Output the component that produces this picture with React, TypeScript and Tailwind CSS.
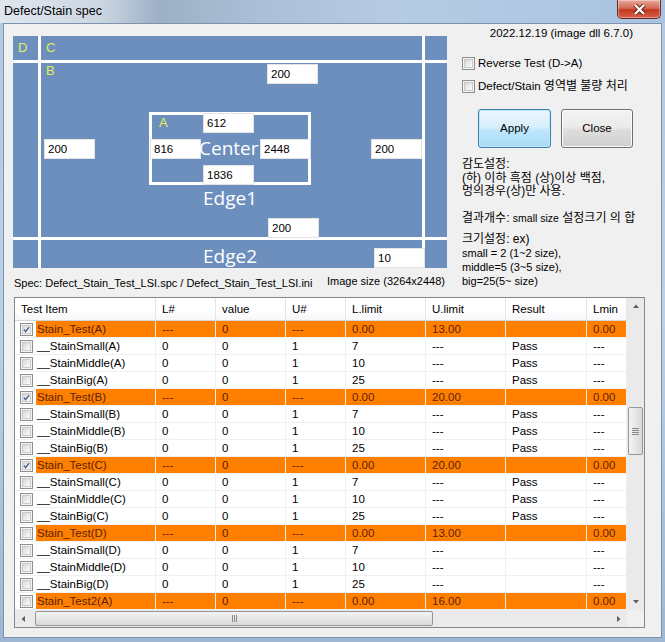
import React from 'react';

type Row = { name: string; head?: boolean; chk?: boolean; cells: string[] };

const rows: Row[] = [
  { name: 'Stain_Test(A)', head: true, chk: true, cells: ['---', '0', '---', '0.00', '13.00', '', '0.00'] },
  { name: '__StainSmall(A)', cells: ['0', '0', '1', '7', '---', 'Pass', '---'] },
  { name: '__StainMiddle(A)', cells: ['0', '0', '1', '10', '---', 'Pass', '---'] },
  { name: '__StainBig(A)', cells: ['0', '0', '1', '25', '---', 'Pass', '---'] },
  { name: 'Stain_Test(B)', head: true, chk: true, cells: ['---', '0', '---', '0.00', '20.00', '', '0.00'] },
  { name: '__StainSmall(B)', cells: ['0', '0', '1', '7', '---', 'Pass', '---'] },
  { name: '__StainMiddle(B)', cells: ['0', '0', '1', '10', '---', 'Pass', '---'] },
  { name: '__StainBig(B)', cells: ['0', '0', '1', '25', '---', 'Pass', '---'] },
  { name: 'Stain_Test(C)', head: true, chk: true, cells: ['---', '0', '---', '0.00', '20.00', '', '0.00'] },
  { name: '__StainSmall(C)', cells: ['0', '0', '1', '7', '---', 'Pass', '---'] },
  { name: '__StainMiddle(C)', cells: ['0', '0', '1', '10', '---', 'Pass', '---'] },
  { name: '__StainBig(C)', cells: ['0', '0', '1', '25', '---', 'Pass', '---'] },
  { name: 'Stain_Test(D)', head: true, cells: ['---', '0', '---', '0.00', '13.00', '', '0.00'] },
  { name: '__StainSmall(D)', cells: ['0', '0', '1', '7', '---', '', '---'] },
  { name: '__StainMiddle(D)', cells: ['0', '0', '1', '10', '---', '', '---'] },
  { name: '__StainBig(D)', cells: ['0', '0', '1', '25', '---', '', '---'] },
  { name: 'Stain_Test2(A)', head: true, cells: ['---', '0', '---', '0.00', '16.00', '', '0.00'] },
];

const headers = ['Test Item', 'L#', 'value', 'U#', 'L.limit', 'U.limit', 'Result', 'Lmin'];
const widths = ['w-[141px]', 'w-[60px]', 'w-[70px]', 'w-[60px]', 'w-[80px]', 'w-[80px]', 'w-[81px]', 'w-[40px]'];

function Check({ on }: { on?: boolean }) {
  return (
    <span className="flex h-[13px] w-[13px] shrink-0 items-center justify-center border border-[#8e8f8f] bg-[#f4f4f4]">
      <span className="flex h-[9px] w-[9px] items-center justify-center border border-[#c9c9c9] bg-[linear-gradient(135deg,#d6d6d6,#fdfdfd)]">
        {on && (
          <svg width="9" height="9" viewBox="0 0 9 9">
            <path d="M1.2 4.6 L3.4 7.2 L7.8 1.4" fill="none" stroke="#3d5a99" strokeWidth="1.7" />
          </svg>
        )}
      </span>
    </span>
  );
}

function Box({ pos, children }: { pos: string; children: React.ReactNode }) {
  return (
    <div className={'absolute h-[20px] w-[51px] border border-[#e4e4e4] bg-white pl-[3px] text-[11.5px] leading-[18px] text-black ' + pos}>
      {children}
    </div>
  );
}

function Arrow({ dir }: { dir: 'up' | 'down' | 'left' | 'right' }) {
  const d = {
    up: 'M1 5 L4 1.5 L7 5 Z',
    down: 'M1 2 L4 5.5 L7 2 Z',
    left: 'M5 1 L1.5 4 L5 7 Z',
    right: 'M2 1 L5.5 4 L2 7 Z',
  }[dir];
  return (
    <svg width="8" height="8" viewBox="0 0 8 8">
      <path d={d} fill="#5f5f5f" />
    </svg>
  );
}

function Diagram() {
  const cell = 'bg-[#6d8fbe]';
  const lbl = 'text-[13px] leading-[14px] text-[#e1ef55]';
  return (
    <div className="relative h-[232px] w-[434px]">
      <div className="grid h-full w-full grid-cols-[25px_381px_22px] grid-rows-[24px_174px_28px] gap-[3px] bg-white">
        <div className={cell + ' pl-[5px] pt-[5px] ' + lbl}>D</div>
        <div className={cell + ' pl-[5px] pt-[5px] ' + lbl}>C</div>
        <div className={cell} />
        <div className={cell} />
        <div className={cell + ' pl-[5px] pt-[1px] ' + lbl}>B</div>
        <div className={cell} />
        <div className={cell} />
        <div className={cell} />
        <div className={cell} />
      </div>

      <div className="absolute left-[136px] top-[76px] h-[73px] w-[162px] border-[3px] border-white" />
      <div className={'absolute left-[146px] top-[80px] ' + lbl}>A</div>

      <Box pos="left-[190px] top-[77px]">612</Box>
      <Box pos="left-[254px] top-[28px]">200</Box>
      <Box pos="left-[31px] top-[103px]">200</Box>
      <Box pos="left-[137px] top-[103px]">816</Box>
      <Box pos="left-[247px] top-[103px]">2448</Box>
      <Box pos="left-[358px] top-[103px]">200</Box>
      <Box pos="left-[190px] top-[129px]">1836</Box>
      <Box pos="left-[255px] top-[182px]">200</Box>
      <Box pos="left-[361px] top-[212px]">10</Box>

      <div className="absolute left-[186px] top-[100px] font-['Open_Sans',sans-serif] text-[19px] leading-[24px] text-white">Center</div>
      <div className="absolute left-[190px] top-[150px] font-['Open_Sans',sans-serif] text-[19px] leading-[24px] text-white">Edge1</div>
      <div className="absolute left-[190px] top-[208px] font-['Open_Sans',sans-serif] text-[19px] leading-[24px] text-white">Edge2</div>
    </div>
  );
}

function Table() {
  return (
    <div className="ml-[10px] mt-[7px] w-[631px] border border-[#828790] bg-white">
      <div className="flex h-[312px]">
        <div className="w-[612px] overflow-hidden whitespace-nowrap">
          <div className="flex h-[23px] border-b border-[#d5d5d5] bg-[linear-gradient(#ffffff,#ffffff_55%,#f6f7f9)]">
            {headers.map((h, i) => (
              <div key={h} className={widths[i] + ' shrink-0 border-r border-[#e3e6ea] pl-[6px] leading-[22px]'}>
                {h}
              </div>
            ))}
          </div>
          {rows.map(r => {
            const bg = r.head ? 'bg-[#ff8000] text-[#5c1f00]' : 'bg-white';
            return (
              <div key={r.name} className="flex h-[17px] border-b border-[#f0f0f0]">
                <div className="flex w-[141px] shrink-0 items-center border-r border-[#f0f0f0] pl-[5px]">
                  <Check on={r.chk} />
                  <span className={'ml-[3px] h-full flex-1 pl-[1px] leading-[16px] ' + bg}>{r.name}</span>
                </div>
                {r.cells.map((c, i) => (
                  <div
                    key={i}
                    className={widths[i + 1] + ' shrink-0 border-r border-[#f0f0f0] pl-[6px] leading-[16px] ' + bg}
                  >
                    {c}
                  </div>
                ))}
              </div>
            );
          })}
        </div>
        <div className="flex w-[17px] flex-col bg-[#eaeaea]">
          <div className="flex h-[17px] items-center justify-center">
            <Arrow dir="up" />
          </div>
          <div className="mx-[1px] mt-[92px] flex h-[48px] flex-col items-center justify-center gap-[1px] rounded-[2px] border border-[#979797] bg-[linear-gradient(90deg,#f4f4f4,#e6e6e6_50%,#d9d9d9)]">
            <span className="h-px w-[7px] bg-[#8a8a8a]" />
            <span className="h-px w-[7px] bg-[#8a8a8a]" />
            <span className="h-px w-[7px] bg-[#8a8a8a]" />
            <span className="h-px w-[7px] bg-[#8a8a8a]" />
          </div>
          <div className="flex-1" />
          <div className="flex h-[17px] items-center justify-center">
            <Arrow dir="down" />
          </div>
        </div>
      </div>
      <div className="flex h-[17px]">
        <div className="flex w-[612px] bg-[#eaeaea]">
          <div className="flex w-[17px] items-center justify-center">
            <Arrow dir="left" />
          </div>
          <div className="my-[1px] ml-[3px] flex w-[398px] items-center justify-center gap-[1px] rounded-[2px] border border-[#979797] bg-[linear-gradient(#f4f4f4,#e6e6e6_50%,#d9d9d9)]">
            <span className="h-[7px] w-px bg-[#8a8a8a]" />
            <span className="h-[7px] w-px bg-[#8a8a8a]" />
            <span className="h-[7px] w-px bg-[#8a8a8a]" />
          </div>
          <div className="flex-1" />
          <div className="flex w-[17px] items-center justify-center">
            <Arrow dir="right" />
          </div>
        </div>
        <div className="w-[17px] bg-[#f0f0f0]" />
      </div>
    </div>
  );
}

export default function App() {
  return (
    <div className="h-[642px] w-[665px] overflow-hidden bg-[linear-gradient(180deg,#b3c9e1,#bcd1e8_50%,#9fb7d2)] font-['Liberation_Sans','Noto_Sans_CJK_KR',sans-serif] text-[11.5px] text-black">
      <div className="flex h-[23px] items-start justify-between bg-[linear-gradient(90deg,#dfe6ee_0%,#cdd7e2_15%,#9cafc5_24%,#aabfd6_38%,#b6cce4_60%,#a8c3e1_100%)]">
        <span className="pl-[4px] pt-[4px] text-[12.5px] leading-[15px]">Defect/Stain spec</span>
        <div className="mr-[4px] flex h-[19px] w-[44px] items-center justify-center rounded-b-[5px] border border-t-0 border-[#6e2a22] bg-[linear-gradient(#e9a99a,#d46a55_45%,#c1381f_55%,#d9614a)] shadow-[inset_0_0_0_1px_rgba(255,255,255,0.35)]">
          <svg width="13" height="11" viewBox="0 0 13 11">
            <path d="M2 1 L11 10 M11 1 L2 10" stroke="#5a1a12" strokeWidth="4" />
            <path d="M2 1 L11 10 M11 1 L2 10" stroke="#ffffff" strokeWidth="2.4" />
          </svg>
        </div>
      </div>

      <div className="mx-[3px] h-[615px] border border-[#7d93ad] bg-[#f0f0f0]">
        <div className="flex">
          <div className="flex w-[443px] shrink-0 flex-col pl-[9px]">
            <div className="mt-[12px]">
              <Diagram />
            </div>
            <div className="mt-[8px] flex h-[14px] w-[434px] items-center justify-between whitespace-nowrap pl-px text-[11px]">
              <span className="leading-[14px]">Spec: Defect_Stain_Test_LSI.spc / Defect_Stain_Test_LSI.ini</span>
              <span className="pb-[4px] pr-[2px] leading-[14px]">Image size (3264x2448)</span>
            </div>
          </div>

          <div className="flex flex-1 flex-col whitespace-nowrap">
            <div className="mt-[2px] h-[14px] pr-[28px] text-right leading-[14px]">2022.12.19 (image dll 6.7.0)</div>
            <div className="mt-[15px] flex h-[17px] items-center gap-[3px] pl-[15px]">
              <Check />
              <span>Reverse Test (D-&gt;A)</span>
            </div>
            <div className="mt-[6px] flex h-[17px] items-center gap-[3px] pl-[15px]">
              <Check />
              <span>
                Defect/Stain <span className="text-[12px]">영역별 불량 처리</span>
              </span>
            </div>
            <div className="mt-[14px] flex gap-[10px] pl-[31px]">
              <button className="flex h-[39px] w-[73px] items-center justify-center rounded-[3px] border border-[#3c7fb1] bg-[linear-gradient(#eaf6fd,#d9f0fc_45%,#bee6fd_55%,#a7d9f5)] shadow-[inset_0_0_0_1px_#c4e5f6]">
                Apply
              </button>
              <button className="flex h-[39px] w-[72px] items-center justify-center rounded-[3px] border border-[#707070] bg-[linear-gradient(#f2f2f2,#ebebeb_45%,#dddddd_55%,#cfcfcf)] shadow-[inset_0_0_0_1px_#fcfcfc]">
                Close
              </button>
            </div>
            <div className="mt-[10px] pl-[15px] text-[12px] leading-[13.5px]">
              <div>감도설정:</div>
              <div>(하) 이하 흑점 (상)이상 백점,</div>
              <div>멍의경우(상)만 사용.</div>
              <div className="mt-[12px] leading-[14px]">
                결과개수: <span className="text-[10.5px]">small size</span> 설정크기 의 합
              </div>
              <div className="mt-[7px] leading-[14px]">크기설정: ex)</div>
              <div className="text-[11px] leading-[14px]">small = 2 (1~2 size),</div>
              <div className="text-[11px] leading-[14px]">middle=5 (3~5 size),</div>
              <div className="text-[11px] leading-[14px]">big=25(5~ size)</div>
            </div>
          </div>
        </div>

        <Table />
      </div>
    </div>
  );
}
